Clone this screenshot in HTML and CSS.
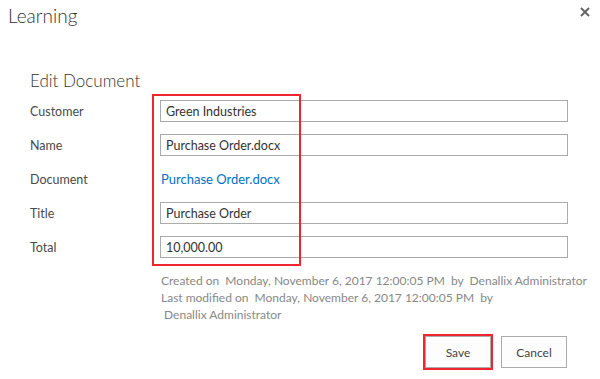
FILE: index.html
```html
<!DOCTYPE html>
<html lang="en">
<head>
    <meta charset="UTF-8">
    <title>Learning</title>
    <link rel="stylesheet" href="styles.css">
</head>
<body>

    <div class="dialog">
        <div class="dialog-header">
            <h1>Learning</h1>
            <button class="close" type="button" aria-label="Close">
                <svg width="10" height="10" viewBox="0 0 10 10">
                    <path d="M1 1 L9 9 M9 1 L1 9" stroke="#666" stroke-width="2"/>
                </svg>
            </button>
        </div>

        <form class="edit-form">
            <h2>Edit Document</h2>

            <div class="fields">
                <label for="customer">Customer</label>
                <input type="text" id="customer" value="Green Industries">

                <label for="name">Name</label>
                <input type="text" id="name" value="Purchase Order.docx">

                <label>Document</label>
                <a class="doc-link" href="#">Purchase Order.docx</a>

                <label for="title">Title</label>
                <input type="text" id="title" value="Purchase Order">

                <label for="total">Total</label>
                <input type="text" id="total" value="10,000.00">

                <div class="highlight fields-highlight"></div>
            </div>

            <div class="meta">
                <div>Created on&nbsp; Monday, November 6, 2017 12:00:05 PM&nbsp; by&nbsp; Denallix Administrator</div>
                <div>Last modified on&nbsp; Monday, November 6, 2017 12:00:05 PM&nbsp; by</div>
                <div>&nbsp;Denallix Administrator</div>
            </div>

            <div class="actions">
                <span class="save-wrap">
                    <button type="submit">Save</button>
                </span>
                <button type="button">Cancel</button>
            </div>
        </form>
    </div>

</body>
</html>
```

FILE: styles.css
```css
/* General styling */
body {
    margin: 0;
    font-family: 'Lato', 'Liberation Sans', sans-serif;
    background: #fff;
    color: #444;
}

.dialog {
    width: 600px;
    height: 379px;
    position: relative;
}

.dialog-header {
    display: flex;
    justify-content: space-between;
    padding: 3px 10px 0 8px;
}

.dialog-header h1 {
    margin: 0;
    font-size: 19px;
    font-weight: 300;
    color: #333;
    line-height: 26px;
}

.close {
    border: none;
    background: none;
    padding: 0;
    margin-top: 4px;
    width: 10px;
    height: 10px;
    cursor: pointer;
}

.close svg {
    display: block;
}

.edit-form {
    padding-left: 30px;
}

.edit-form h2 {
    margin: 40px 0 7px;
    font-size: 17px;
    font-weight: 300;
    line-height: 24px;
    color: #333;
}

.fields {
    position: relative;
    display: grid;
    grid-template-columns: 130px 408px;
    grid-auto-rows: 22px;
    row-gap: 12px;
    align-items: center;
}

.fields label {
    font-size: 12.5px;
    color: #4a4a4a;
}

.fields input {
    height: 22px;
    box-sizing: border-box;
    border: 1px solid #ababab;
    padding: 0 5px;
    font-family: inherit;
    font-size: 12.5px;
    color: #333;
    outline: none;
}

.doc-link {
    color: #0072c6;
    font-size: 13px;
    text-decoration: none;
    padding-left: 1px;
}

/* red annotation boxes */
.highlight {
    position: absolute;
    border: 2px solid #f0262c;
    pointer-events: none;
}

.fields-highlight {
    left: 122px;
    top: -6px;
    width: 145px;
    height: 168px;
}

.meta {
    margin: 14px 0 0 131px;
    font-size: 12px;
    line-height: 17px;
    color: #888;
    white-space: nowrap;
}

.actions {
    display: flex;
    justify-content: flex-end;
    align-items: center;
    gap: 8px;
    padding-right: 33px;
    margin-top: 11px;
}

.actions button {
    width: 66px;
    height: 32px;
    border: 1px solid #ababab;
    background: #fdfdfd;
    font-family: inherit;
    font-size: 12px;
    color: #444;
    cursor: pointer;
}

.save-wrap {
    display: block;
    border: 2px solid #f0262c;
    padding: 0;
}

.save-wrap button {
    display: block;
}
```
